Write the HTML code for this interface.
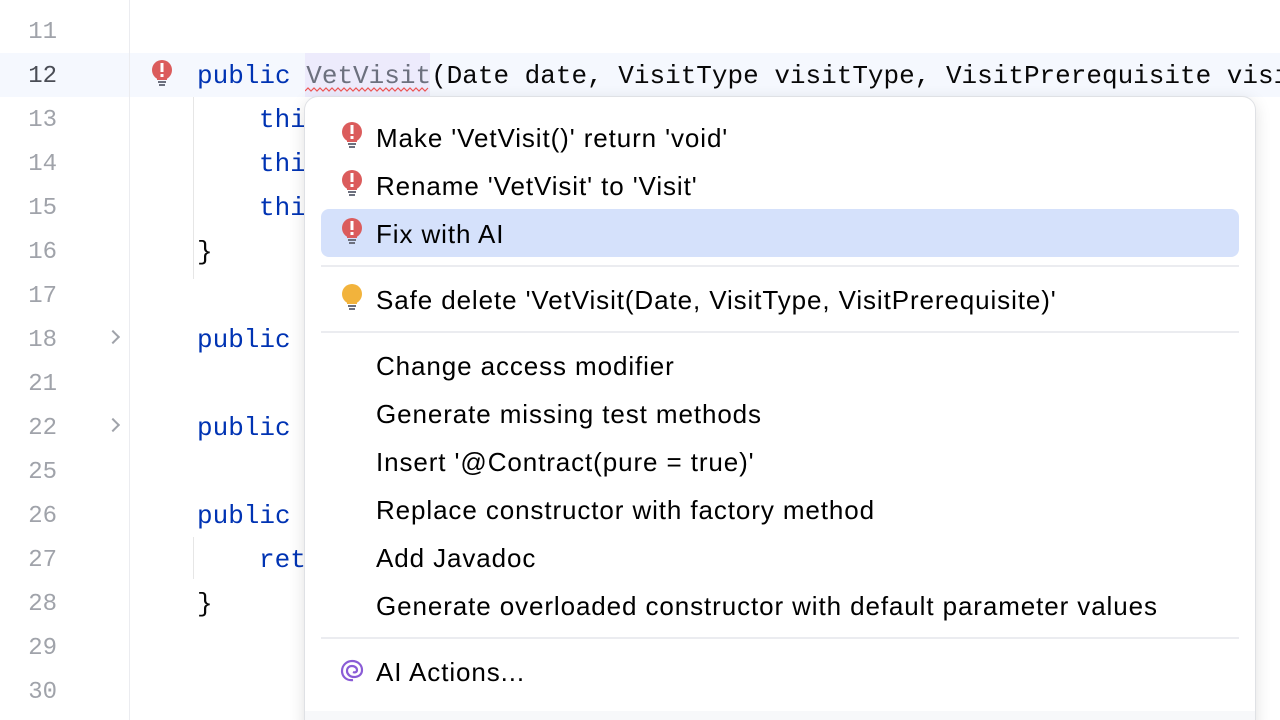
<!DOCTYPE html>
<html><head><style>
html,body{margin:0;width:1280px;height:720px;overflow:hidden}
body{background:#fff;position:relative;font-family:"Liberation Mono",monospace}
.ln{position:absolute;left:0;width:57px;text-align:right;font-size:24px;color:#a0a3aa;line-height:44px;margin-top:2px}
.gut{position:absolute;left:129px;top:0;width:1px;height:720px;background:#ebecf0}
.code{position:absolute;left:197px;font-size:26px;line-height:44px;color:#080808;white-space:pre;margin-top:1px}
.kw{color:#0033b3}
.pop{position:absolute;left:304px;top:96px;width:950px;height:640px;background:#fff;border:1px solid #dfe1e5;border-radius:14px;box-shadow:0 4px 16px rgba(0,0,0,.12);font-family:"Liberation Sans",sans-serif;overflow:hidden}
.it{position:absolute;left:71px;font-size:26px;letter-spacing:0.9px;line-height:48px;color:#000;white-space:nowrap;margin-top:1px}
.sep{position:absolute;left:16px;right:16px;height:2px;background:#ebecf0}
.ic{position:absolute;left:35px}
</style></head><body>
<div style="position:absolute;left:0;top:53px;width:1280px;height:44px;background:#f5f8fe"></div>
<div class="gut"></div>
<div style="position:absolute;left:193px;top:97px;width:1px;height:182px;background:#e6e6e6"></div>
<div style="position:absolute;left:193px;top:537px;width:1px;height:42px;background:#e6e6e6"></div>
<div class="ln" style="top:9px">11</div>
<div class="ln" style="top:53px;color:#4a4d55">12</div>
<div class="ln" style="top:97px">13</div>
<div class="ln" style="top:141px">14</div>
<div class="ln" style="top:185px">15</div>
<div class="ln" style="top:229px">16</div>
<div class="ln" style="top:273px">17</div>
<div class="ln" style="top:317px">18</div>
<div class="ln" style="top:361px">21</div>
<div class="ln" style="top:405px">22</div>
<div class="ln" style="top:449px">25</div>
<div class="ln" style="top:493px">26</div>
<div class="ln" style="top:537px">27</div>
<div class="ln" style="top:581px">28</div>
<div class="ln" style="top:625px">29</div>
<div class="ln" style="top:669px">30</div>
<div style="position:absolute;left:108px;top:332px;width:8px;height:8px;border-right:2px solid #a0a3aa;border-bottom:2px solid #a0a3aa;transform:rotate(-45deg)"></div>
<div style="position:absolute;left:108px;top:420px;width:8px;height:8px;border-right:2px solid #a0a3aa;border-bottom:2px solid #a0a3aa;transform:rotate(-45deg)"></div>
<svg style="position:absolute;left:150px;top:59px" width="24" height="30" viewBox="0 0 24 30"><circle cx="12" cy="11" r="10" fill="#db5c5c"/><rect x="7" y="15" width="10" height="6" fill="#db5c5c"/><rect x="10.5" y="4" width="3" height="9" fill="#fff"/><rect x="10.5" y="15" width="3" height="3" fill="#fff"/><rect x="8" y="22" width="8" height="2" fill="#6c707e"/><rect x="9" y="25" width="6" height="2" fill="#6c707e"/></svg>
<div style="position:absolute;left:305px;top:53px;width:125px;height:44px;background:#edebfc"></div>
<div class="code" style="top:53px"><span class="kw">public</span> <span style="color:#6c707e">VetVisit</span>(Date date, VisitType visitType, VisitPrerequisite visi</div>
<svg style="position:absolute;left:305px;top:87px" width="125" height="6"><path d="M0 4 L3 1 L6 4 L9 1 L12 4 L15 1 L18 4 L21 1 L24 4 L27 1 L30 4 L33 1 L36 4 L39 1 L42 4 L45 1 L48 4 L51 1 L54 4 L57 1 L60 4 L63 1 L66 4 L69 1 L72 4 L75 1 L78 4 L81 1 L84 4 L87 1 L90 4 L93 1 L96 4 L99 1 L102 4 L105 1 L108 4 L111 1 L114 4 L117 1 L120 4 L123 1" stroke="#e55" fill="none" stroke-width="1.2"/></svg>
<div class="code kw" style="top:97px;left:259px">thi</div>
<div class="code kw" style="top:141px;left:259px">thi</div>
<div class="code kw" style="top:185px;left:259px">thi</div>
<div class="code" style="top:229px">}</div>
<div class="code kw" style="top:317px">public</div>
<div class="code kw" style="top:405px">public</div>
<div class="code kw" style="top:493px">public</div>
<div class="code kw" style="top:537px;left:259px">ret</div>
<div class="code" style="top:581px">}</div>
<div class="pop">
<div style="position:absolute;left:16px;top:112px;width:918px;height:48px;background:#d5e1fb;border-radius:8px"></div>
<svg class="ic" style="top:24px" width="24" height="30" viewBox="0 0 24 30"><circle cx="12" cy="11" r="10" fill="#db5c5c"/><rect x="7" y="15" width="10" height="6" fill="#db5c5c"/><rect x="10.5" y="4" width="3" height="9" fill="#fff"/><rect x="10.5" y="15" width="3" height="3" fill="#fff"/><rect x="8" y="22" width="8" height="2" fill="#6c707e"/><rect x="9" y="25" width="6" height="2" fill="#6c707e"/></svg>
<svg class="ic" style="top:72px" width="24" height="30" viewBox="0 0 24 30"><circle cx="12" cy="11" r="10" fill="#db5c5c"/><rect x="7" y="15" width="10" height="6" fill="#db5c5c"/><rect x="10.5" y="4" width="3" height="9" fill="#fff"/><rect x="10.5" y="15" width="3" height="3" fill="#fff"/><rect x="8" y="22" width="8" height="2" fill="#6c707e"/><rect x="9" y="25" width="6" height="2" fill="#6c707e"/></svg>
<svg class="ic" style="top:120px" width="24" height="30" viewBox="0 0 24 30"><circle cx="12" cy="11" r="10" fill="#db5c5c"/><rect x="7" y="15" width="10" height="6" fill="#db5c5c"/><rect x="10.5" y="4" width="3" height="9" fill="#fff"/><rect x="10.5" y="15" width="3" height="3" fill="#fff"/><rect x="8" y="22" width="8" height="2" fill="#6c707e"/><rect x="9" y="25" width="6" height="2" fill="#6c707e"/></svg>
<svg class="ic" style="top:186px" width="24" height="30" viewBox="0 0 24 30"><circle cx="12" cy="11" r="10" fill="#f2b33c"/><rect x="7" y="15" width="10" height="6" fill="#f2b33c"/><rect x="8" y="22" width="8" height="2" fill="#6c707e"/><rect x="9" y="25" width="6" height="2" fill="#6c707e"/></svg>
<svg class="ic" style="top:562px" width="24" height="24" viewBox="0 0 24 24" fill="none" stroke="#8a5cd6" stroke-width="2.2"><path d="M13 21 C6 22 2 17 2 12 C2 6 7 2 12 2 C18 2 22 6 22 11 C22 16 18 18 14 18 C10 18 7 15 7 12 C7 9 9 7 12 7 C15 7 17 9 17 11 C17 13 15 14 13 13"/></svg>
<div class="it" style="top:16px">Make 'VetVisit()' return 'void'</div>
<div class="it" style="top:64px">Rename 'VetVisit' to 'Visit'</div>
<div class="it" style="top:112px">Fix with AI</div>
<div class="sep" style="top:168px"></div>
<div class="it" style="top:178px">Safe delete 'VetVisit(Date, VisitType, VisitPrerequisite)'</div>
<div class="sep" style="top:234px"></div>
<div class="it" style="top:244px">Change access modifier</div>
<div class="it" style="top:292px">Generate missing test methods</div>
<div class="it" style="top:340px">Insert '@Contract(pure = true)'</div>
<div class="it" style="top:388px">Replace constructor with factory method</div>
<div class="it" style="top:436px">Add Javadoc</div>
<div class="it" style="top:484px">Generate overloaded constructor with default parameter values</div>
<div class="sep" style="top:540px"></div>
<div class="it" style="top:550px">AI Actions...</div>
<div style="position:absolute;left:0;right:0;top:614px;height:40px;background:#f7f8fa"></div>
</div>
</body></html>
